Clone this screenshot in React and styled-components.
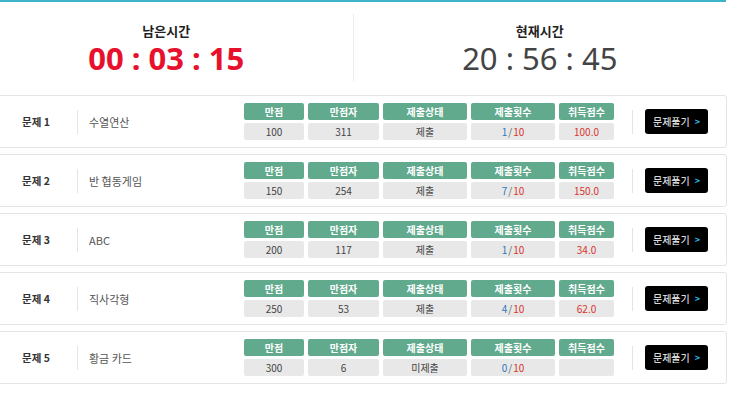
import React from 'react'
import styled, { createGlobalStyle } from 'styled-components'

const GlobalStyle = createGlobalStyle`
  html, body {
    margin: 0;
    padding: 0;
    background: #fff;
    overflow: hidden;
  }
  body {
    font-family: "Noto Sans CJK KR", "Noto Sans", sans-serif;
    color: #333;
  }
`

const problems = [
    { no: 1, title: '수열연산', full: 100, fullCount: 311, status: '제출', tries: 1, score: '100.0' },
    { no: 2, title: '반 협동게임', full: 150, fullCount: 254, status: '제출', tries: 7, score: '150.0' },
    { no: 3, title: 'ABC', full: 200, fullCount: 117, status: '제출', tries: 1, score: '34.0' },
    { no: 4, title: '직사각형', full: 250, fullCount: 53, status: '제출', tries: 4, score: '62.0' },
    { no: 5, title: '황금 카드', full: 300, fullCount: 6, status: '미제출', tries: 0, score: '' },
]

const heads = ['만점', '만점자', '제출상태', '제출횟수', '취득점수']

const Page = styled.div`
    width: 747px;
    margin-left: -20px;
`

const TimerBar = styled.header`
    display: flex;
    border-top: 2px solid #3db3cc;
    width: 746px;
    margin-bottom: 14px;
`

const TimerBox = styled.div`
    flex: 1;
    display: flex;
    flex-direction: column;
    align-items: center;
    height: 67px;
    margin-top: 12px;
    border-right: ${p => (p.divider ? '1px solid #ececec' : 'none')};
`

const TimerLabel = styled.div`
    margin-top: 7px;
    font-size: 13px;
    font-weight: 700;
    line-height: 19px;
    color: #222;
`

const TimerValue = styled.div`
    font-family: "Noto Sans", "Noto Sans CJK KR", sans-serif;
    font-size: 31px;
    line-height: 36px;
    font-weight: ${p => (p.remain ? 700 : 400)};
    color: ${p => (p.remain ? '#e8112d' : '#444')};
`

const List = styled.div`
    display: flex;
    flex-direction: column;
    gap: 6px;
`

const Card = styled.div`
    display: flex;
    align-items: center;
    height: 51px;
    padding: 0 18px 0 41px;
    border: 1px solid #e4e4e4;
    border-radius: 3px;
    background: #fff;
`

const Num = styled.div`
    width: 55px;
    font-size: 10.5px;
    font-weight: 700;
    color: #333;
`

const VLine = styled.div`
    width: 1px;
    height: 24px;
    background: #e4e4e4;
`

const Title = styled.div`
    flex: 1;
    padding-left: 11px;
    font-size: 11px;
    color: #555;
`

const Table = styled.div`
    display: grid;
    grid-template-columns: 60px 71px 84px 84px 55px;
    grid-template-rows: 17px 17px;
    column-gap: 4px;
    row-gap: 3px;
    margin-right: 18px;
`

const Head = styled.div`
    display: flex;
    align-items: center;
    justify-content: center;
    background: #62aa8d;
    border-radius: 2px;
    font-size: 10px;
    font-weight: 700;
    color: #fff;
`

const Cell = styled.div`
    display: flex;
    align-items: center;
    justify-content: center;
    background: #e8e8e8;
    border-radius: 2px;
    font-size: 10px;
    color: ${p => p.color || '#444'};
`

const Tries = styled.span`
    color: #2b78c0;
`

const Slash = styled.span`
    color: #666;
    margin: 0 1px;
`

const Limit = styled.span`
    color: #d8352c;
`

const SolveButton = styled.button`
    display: flex;
    align-items: center;
    justify-content: center;
    gap: 5px;
    width: 63px;
    height: 25px;
    margin-left: 12px;
    padding: 0;
    border: none;
    border-radius: 3px;
    background: #000;
    color: #fff;
    font-family: inherit;
    font-size: 10px;
    cursor: pointer;
`

const Arrow = styled.span`
    color: #2bb7e6;
    font-weight: 700;
    font-size: 9px;
`

const App = () => {
    return (
        <Page>
            <GlobalStyle />
            <TimerBar>
                <TimerBox divider>
                    <TimerLabel>남은시간</TimerLabel>
                    <TimerValue remain>00 : 03 : 15</TimerValue>
                </TimerBox>
                <TimerBox>
                    <TimerLabel>현재시간</TimerLabel>
                    <TimerValue>20 : 56 : 45</TimerValue>
                </TimerBox>
            </TimerBar>

            <List>
                {problems.map(p => (
                    <Card key={p.no}>
                        <Num>문제 {p.no}</Num>
                        <VLine />
                        <Title>{p.title}</Title>
                        <Table>
                            {heads.map(h => <Head key={h}>{h}</Head>)}
                            <Cell>{p.full}</Cell>
                            <Cell>{p.fullCount}</Cell>
                            <Cell>{p.status}</Cell>
                            <Cell>
                                <Tries>{p.tries}</Tries>
                                <Slash>/</Slash>
                                <Limit>10</Limit>
                            </Cell>
                            <Cell color="#d8352c">{p.score}</Cell>
                        </Table>
                        <VLine />
                        <SolveButton>
                            문제풀기 <Arrow>&gt;</Arrow>
                        </SolveButton>
                    </Card>
                ))}
            </List>
        </Page>
    )
}

export default App
